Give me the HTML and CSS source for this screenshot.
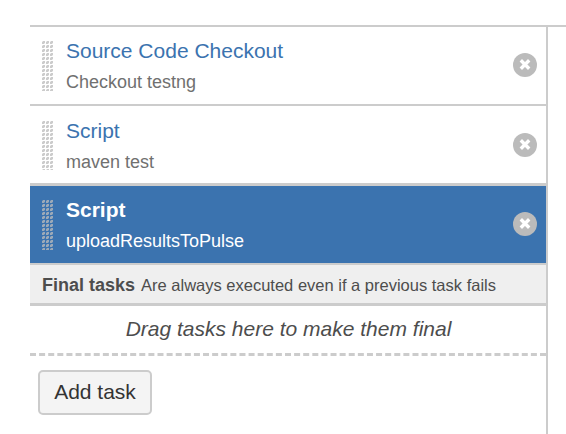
FILE: index.html
```html
<!DOCTYPE html>
<html lang="en">
<head>
<meta charset="utf-8">
<title>Tasks</title>
<link rel="stylesheet" href="styles.css">
</head>
<body>
<svg class="defs" width="0" height="0" aria-hidden="true">
  <defs>
    <pattern id="dots" width="4" height="4" patternUnits="userSpaceOnUse">
      <path d="M1 0h2v2h-1v1h-2v-2h1z" fill="#bbb" opacity=".75"/>
      <path d="M0 0h1v1h-1zM2 2h1v1h-1z" fill="#bbb" opacity=".3"/>
    </pattern>
    <symbol id="remove" viewBox="0 0 24 24">
      <circle cx="12" cy="12" r="12" fill="#bbb"/>
      <path d="M7.8 7.3l8.4 8.4M16.2 7.3l-8.4 8.4" stroke="#fff" stroke-width="3.4"/>
    </symbol>
  </defs>
</svg>
<main class="layout">
  <section class="tasks">
    <ul class="task-list">
      <li class="task">
        <svg class="handle"><rect width="12" height="50" fill="url(#dots)"/></svg>
        <div class="info"><a class="name">Source Code Checkout</a><span class="desc">Checkout testng</span></div>
        <svg class="remove"><use href="#remove"/></svg>
      </li>
      <li class="task before-active">
        <svg class="handle"><rect width="12" height="49" fill="url(#dots)"/></svg>
        <div class="info"><a class="name">Script</a><span class="desc">maven test</span></div>
        <svg class="remove"><use href="#remove"/></svg>
      </li>
      <li class="task active">
        <svg class="handle"><rect width="12" height="50" fill="url(#dots)"/></svg>
        <div class="info"><a class="name">Script</a><span class="desc">uploadResultsToPulse</span></div>
        <svg class="remove"><use href="#remove"/></svg>
      </li>
    </ul>
    <header class="final"><strong>Final tasks</strong><span>Are always executed even if a previous task fails</span></header>
    <div class="drop">
      <em>Drag tasks here to make them final</em>
      <svg class="dash"><path d="M0 1.5h516" stroke="#ccc" stroke-width="3" stroke-dasharray="6 3.107"/></svg>
    </div>
    <button class="add">Add task</button>
  </section>
</main>
</body>
</html>
```
FILE: styles.css
```css
* { box-sizing: border-box; }
body {
  margin: 0;
  background: #fff;
  color: #4d4d4d;
  font-family: "Liberation Sans", Arial, sans-serif;
}
.defs { position: absolute; }
.layout {
  height: 409px;
  margin: 25px 0 0 30px;
  border-top: 2px solid #ccc;
}
.tasks {
  width: 518px;
  height: 100%;
  border-right: 2px solid #ccc;
}
.task-list { margin: 0; padding: 0; list-style: none; }
.task {
  display: flex;
  align-items: flex-start;
  height: 79px;
  padding: 14px 9px 0 12px;
  border-bottom: 2px solid #ccc;
}
.before-active { height: 80px; padding-top: 15px; border-bottom-width: 3px; }
.handle { width: 12px; height: 50px; flex: none; }
.info {
  display: flex;
  flex: 1;
  flex-direction: column;
  margin: -3px 0 0 12px;
  white-space: nowrap;
}
.name { font-size: 21px; line-height: 26px; color: #3b73af; }
.desc { margin-top: 8px; font-size: 18px; line-height: 20px; color: #707070; }
.remove { width: 24px; height: 24px; flex: none; margin-top: 12px; }
.active { background: #3b73af; }
.active .name { color: #fff; font-weight: bold; }
.active .desc { color: #fff; }
.final {
  display: flex;
  align-items: baseline;
  gap: 6px;
  height: 41px;
  padding: 10px 0 0 12px;
  background: #efefef;
  border-bottom: 3px solid #ccc;
  line-height: 20px;
  white-space: nowrap;
}
.final strong { font-size: 18px; }
.final span { font-size: 16.5px; }
.drop { height: 50px; text-align: center; }
.drop em { display: block; height: 47px; padding-left: 1px; font-size: 21px; line-height: 46px; white-space: nowrap; }
.dash { display: block; width: 516px; height: 3px; }
.add {
  display: block;
  width: 114px;
  height: 45px;
  margin: 14px 0 0 8px;
  padding: 0 0 2px;
  border: 2px solid #ccc;
  border-radius: 5px;
  background: #f4f4f4;
  color: #333;
  font: 21px "Liberation Sans", Arial, sans-serif;
}
```
